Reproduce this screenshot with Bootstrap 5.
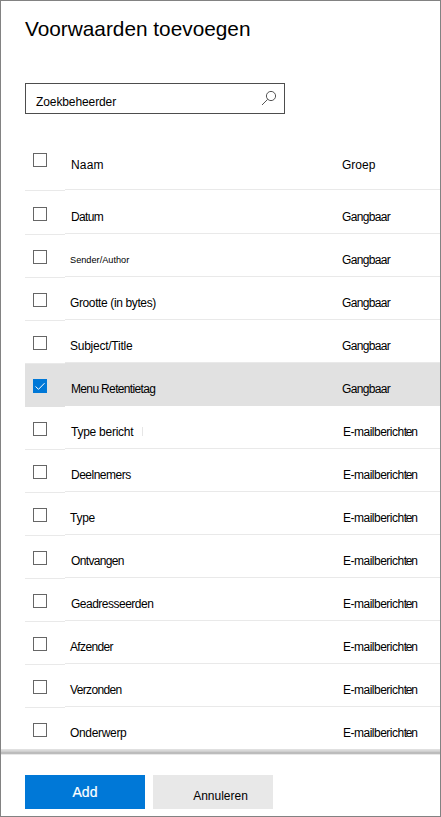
<!DOCTYPE html>
<html lang="nl">
<head>
<meta charset="utf-8">
<meta name="viewport" content="width=device-width, initial-scale=1">
<title>Voorwaarden toevoegen</title>
<link href="https://cdn.jsdelivr.net/npm/bootstrap@5.3.0/dist/css/bootstrap.min.css" rel="stylesheet">
<style>
body{font-family:"Liberation Sans",Arial,sans-serif;font-size:12px;line-height:15px;color:#000;background:#fff}
.panel{height:817px;border:1px solid #828282;overflow:hidden}
.panel-title{font-size:20.8px;line-height:24px;margin:16px 0 0 24px;font-weight:400}
.search-box{width:260px;height:31px;margin:42px 0 0 24px;border:1px solid #4d4d4d;padding:11px 7px 0 10px;letter-spacing:-.1px}
.search-box svg{margin-top:-5px}
.conditions{margin:27px 0 0 24px}
.cond{height:43px}
.cond:nth-child(2){height:44px;padding-top:0}
.cond.head-row{height:50px}
.pick{width:40px;border-bottom:1px solid #e9e9e9;padding:15px 0 0 8px}
.cond:nth-child(2) .pick{padding-top:16px}
.head-row .pick{padding-top:12px}
.info{margin-top:-1px;margin-bottom:1px;border-bottom:1px solid #e9e9e9;padding:19px 0 0 5px;white-space:nowrap}
.cond:nth-child(2) .info{padding-top:20px}
.head-row .info{padding-top:18px}
.label{width:272px}
.chosen .pick,.chosen .info{background:#e1e1e1;border-color:#e1e1e1}
.form-check-input.tick{width:14px;height:14px;margin:0;border:1px solid #666;border-radius:0;display:block;background-color:#fff}
.form-check-input.tick:checked{background-color:#0078d7;border-color:#0078d7;background-image:none}
.tick-wrap{display:grid;width:14px}
.tick-wrap>*{grid-area:1/1}
.t0{letter-spacing:.2px}.ta{letter-spacing:-.25px}.t1{letter-spacing:-.33px}.t2{letter-spacing:-.5px}.t3{letter-spacing:-.65px}.t4{letter-spacing:-.65px}.t9{letter-spacing:-1.2px}
.tg{letter-spacing:-.38px}
.tiny{font-size:9.2px}
.nudge{padding-left:1px}
.caret{display:inline-block;height:9px;border-left:1px solid #e6e6e6;margin-left:9px}
.edge{height:6px;margin-top:-2px;background:linear-gradient(#e0e0e0 0 1px,#d8d8d8 1px 2px,#cecece 2px 3px,#bcbcbc 3px 5px,#e8e8e8 5px)}
.actions{padding:20px 0 0 24px}
.btn.act{width:120px;height:34px;border:0;border-radius:0;padding:0;line-height:34px}
.btn.add{background:#0078d7;color:#fff;font-size:14px;-webkit-text-stroke:.2px #fff}
.btn.cancel{background:#e8e8e8;color:#000;font-size:12px;padding:4px 0 0 15px}
</style>
</head>
<body>
<main class="panel d-flex flex-column">
<h1 class="panel-title">Voorwaarden toevoegen</h1>
<div class="search-box d-flex justify-content-between"><span>Zoekbeheerder</span>
<svg width="16" height="16" viewBox="0 0 16 16" fill="none" stroke="#555" stroke-width="1"><circle cx="10" cy="6" r="4.6"/><path d="M6.7 9.3 1 15"/></svg></div>
<div class="conditions">
<div class="cond head-row d-flex"><div class="pick"><input class="form-check-input tick" type="checkbox"></div><div class="info d-flex flex-grow-1"><span class="label t0 nudge">Naam</span><span>Groep</span></div></div>
<div class="cond d-flex"><div class="pick"><input class="form-check-input tick" type="checkbox"></div><div class="info d-flex flex-grow-1"><span class="label t4 nudge">Datum</span><span class="t4">Gangbaar</span></div></div>
<div class="cond d-flex"><div class="pick"><input class="form-check-input tick" type="checkbox"></div><div class="info d-flex flex-grow-1"><span class="label tiny">Sender/Author</span><span class="t4">Gangbaar</span></div></div>
<div class="cond d-flex"><div class="pick"><input class="form-check-input tick" type="checkbox"></div><div class="info d-flex flex-grow-1"><span class="label tg">Grootte (in bytes)</span><span class="t4">Gangbaar</span></div></div>
<div class="cond d-flex"><div class="pick"><input class="form-check-input tick" type="checkbox"></div><div class="info d-flex flex-grow-1"><span class="label ta">Subject/Title</span><span class="t4">Gangbaar</span></div></div>
<div class="cond chosen d-flex"><div class="pick"><div class="tick-wrap"><input class="form-check-input tick" type="checkbox" checked><svg class="pe-none" width="14" height="14" viewBox="0 0 14 14" fill="none" stroke="#fff"><path d="M2.5 7.5 5.5 10.3 11.5 4.2"/></svg></div></div><div class="info d-flex flex-grow-1"><span class="label t3 nudge">Menu Retentietag</span><span class="t4">Gangbaar</span></div></div>
<div class="cond d-flex"><div class="pick"><input class="form-check-input tick" type="checkbox"></div><div class="info d-flex flex-grow-1"><span class="label ta nudge">Type bericht<span class="caret"></span></span><span class="t2 nudge">E-mailberich<span class="t9">ten</span></span></div></div>
<div class="cond d-flex"><div class="pick"><input class="form-check-input tick" type="checkbox"></div><div class="info d-flex flex-grow-1"><span class="label t2 nudge">Deelnemers</span><span class="t2 nudge">E-mailberich<span class="t9">ten</span></span></div></div>
<div class="cond d-flex"><div class="pick"><input class="form-check-input tick" type="checkbox"></div><div class="info d-flex flex-grow-1"><span class="label ta">Type</span><span class="t2 nudge">E-mailberich<span class="t9">ten</span></span></div></div>
<div class="cond d-flex"><div class="pick"><input class="form-check-input tick" type="checkbox"></div><div class="info d-flex flex-grow-1"><span class="label t3 nudge">Ontvangen</span><span class="t2 nudge">E-mailberich<span class="t9">ten</span></span></div></div>
<div class="cond d-flex"><div class="pick"><input class="form-check-input tick" type="checkbox"></div><div class="info d-flex flex-grow-1"><span class="label t2 nudge">Geadresseerden</span><span class="t2 nudge">E-mailberich<span class="t9">ten</span></span></div></div>
<div class="cond d-flex"><div class="pick"><input class="form-check-input tick" type="checkbox"></div><div class="info d-flex flex-grow-1"><span class="label t3">Afzender</span><span class="t2 nudge">E-mailberich<span class="t9">ten</span></span></div></div>
<div class="cond d-flex"><div class="pick"><input class="form-check-input tick" type="checkbox"></div><div class="info d-flex flex-grow-1"><span class="label t3">Verzonden</span><span class="t2 nudge">E-mailberich<span class="t9">ten</span></span></div></div>
<div class="cond d-flex"><div class="pick"><input class="form-check-input tick" type="checkbox"></div><div class="info d-flex flex-grow-1"><span class="label t1">Onderwerp</span><span class="t2 nudge">E-mailberich<span class="t9">ten</span></span></div></div>
</div>
<div class="edge flex-shrink-0"></div>
<div class="actions d-flex gap-2"><button class="btn act add" type="button">Add</button><button class="btn act cancel" type="button">Annuleren</button></div>
</main>
<script src="https://cdn.jsdelivr.net/npm/bootstrap@5.3.0/dist/js/bootstrap.bundle.min.js"></script>
</body>
</html>
